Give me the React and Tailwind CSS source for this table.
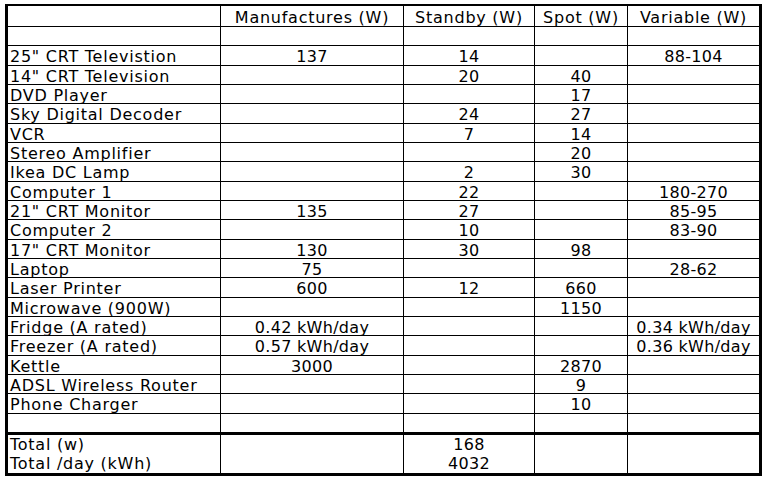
import React from "react";

const rows = [
  ["", "", "", "", ""],
  ['25" CRT Televistion', "137", "14", "", "88-104"],
  ['14" CRT Television', "", "20", "40", ""],
  ["DVD Player", "", "", "17", ""],
  ["Sky Digital Decoder", "", "24", "27", ""],
  ["VCR", "", "7", "14", ""],
  ["Stereo Amplifier", "", "", "20", ""],
  ["Ikea DC Lamp", "", "2", "30", ""],
  ["Computer 1", "", "22", "", "180-270"],
  ['21" CRT Monitor', "135", "27", "", "85-95"],
  ["Computer 2", "", "10", "", "83-90"],
  ['17" CRT Monitor', "130", "30", "98", ""],
  ["Laptop", "75", "", "", "28-62"],
  ["Laser Printer", "600", "12", "660", ""],
  ["Microwave (900W)", "", "", "1150", ""],
  ["Fridge (A rated)", "0.42 kWh/day", "", "", "0.34 kWh/day"],
  ["Freezer (A rated)", "0.57 kWh/day", "", "", "0.36 kWh/day"],
  ["Kettle", "3000", "", "2870", ""],
  ["ADSL Wireless Router", "", "", "9", ""],
  ["Phone Charger", "", "", "10", ""],
  ["", "", "", "", ""],
];

// column widths include the 1px divider on the right
const cols = ["w-[213px]", "w-[183px]", "w-[131px]", "w-[93px]"];

function Row({ cells, className, header }) {
  return (
    <div className={"flex " + className}>
      {cells.map((c, i) => (
        <div
          key={i}
          className={
            (i < 4 ? cols[i] + " border-r border-black " : "flex-1 ") +
            (i === 0 ? "pl-[2px] text-left " : "text-center ") +
            (header || i === 0 ? "tracking-[0.75px] " : "tracking-[0.3px] ") +
            (header ? "pt-[2px] " : "pt-[1px] ") +
            "whitespace-nowrap leading-[20px]"
          }
        >
          {c}
        </div>
      ))}
    </div>
  );
}

export default function App() {
  return (
    <div
      className="w-[769px] h-[481px] bg-white text-black pt-[4px] pl-[5px]"
      style={{ fontFamily: '"DejaVu Sans", Verdana, sans-serif' }}
    >
      <div className="w-[757px] border-black border-t-[2px] border-x-[3px] border-b-[3px] text-[16px]">
        <Row
          header
          className="h-[21px] border-b border-black"
          cells={["", "Manufactures (W)", "Standby (W)", "Spot (W)", "Variable (W)"]}
        />
        {rows.map((r, i) => (
          <Row
            key={i}
            cells={r}
            className={
              (i === 20
                ? "h-[21px] border-b-[3px] "
                : i % 3 === 1
                ? "h-[20px] border-b "
                : "h-[19px] border-b ") + "border-black"
            }
          />
        ))}
        <div className="flex h-[38px] leading-[19px]">
          <div className="w-[213px] border-r border-black pl-[2px] tracking-[0.75px]">
            <div>Total (w)</div>
            <div>Total /day (kWh)</div>
          </div>
          <div className="w-[183px] border-r border-black" />
          <div className="w-[131px] border-r border-black text-center tracking-[0.3px]">
            <div>168</div>
            <div>4032</div>
          </div>
          <div className="w-[93px] border-r border-black" />
          <div className="flex-1" />
        </div>
      </div>
    </div>
  );
}
